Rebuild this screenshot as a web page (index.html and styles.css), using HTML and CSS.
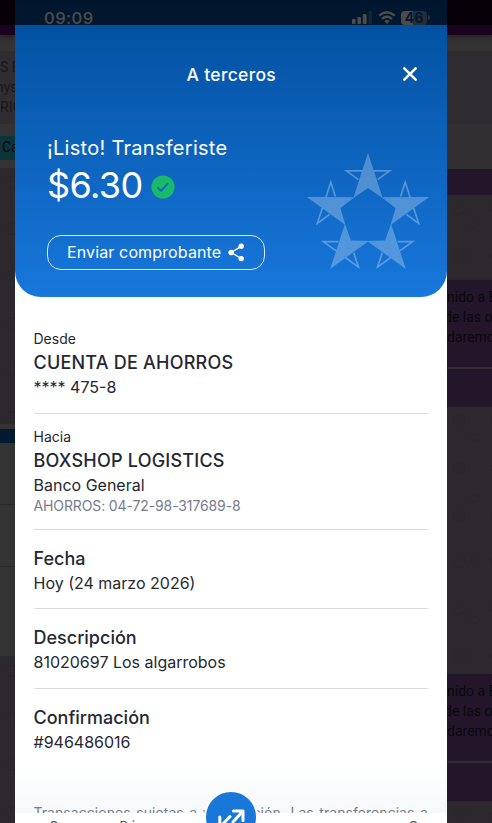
FILE: index.html
```
<!DOCTYPE html>
<html lang="es">
<head>
<meta charset="utf-8">
<title>A terceros</title>
<link rel="stylesheet" href="styles.css">
</head>
<body>
<div class="screen">
  <aside class="side left">
    <div class="topbar"></div>
    <div class="gap g16"></div>
    <div class="info"><span>S B</span><span>nys</span><span>RIO</span></div>
    <div class="gap g12"></div>
    <div class="tab">Ca</div>
    <div class="gap g8"></div>
    <div class="pattern p256"></div>
    <div class="gap g5"></div>
    <div class="navy"></div>
    <div class="cell c61"></div>
    <div class="cell c62"></div>
    <div class="cell c90"></div>
    <div class="pattern grow"></div>
  </aside>

  <main class="sheet">
    <header class="hero">
      <div class="status">
        <span class="time">09:09</span>
        <svg class="signal" width="20" height="13" viewBox="0 0 20 13"><rect x="0" y="8" width="3.6" height="5" rx="1"/><rect x="5.4" y="6" width="3.6" height="7" rx="1"/><rect x="10.8" y="3" width="3.8" height="10" rx="1"/><rect x="16.4" y="0" width="3.6" height="13" rx="1" opacity=".25"/></svg>
        <svg class="wifi" width="18" height="13" viewBox="0 0 18 13"><path d="M1.2 4.7Q9-2 16.8 4.7M4 7.8Q9 3.6 14 7.8"/><path class="dot" d="M9 13 6.2 10.1Q9 7.7 11.8 10.1Z"/></svg>
        <span class="battery">46</span><span class="cap"></span>
      </div>
      <div class="title">
        <h1>A terceros</h1>
        <svg class="close" width="16" height="16" viewBox="0 0 16 16"><path d="M2.3 2.3 13.7 13.7M13.7 2.3 2.3 13.7"/></svg>
      </div>
      <div class="result">
        <div class="summary">
          <p class="done">¡Listo! Transferiste</p>
          <p class="amount"><span>$6.30</span>
            <svg width="24" height="24" viewBox="0 0 24 24"><circle cx="12" cy="12" r="11.6" fill="#18b969"/><path d="m7 12.7 3.2 3.2 6.5-7.2" fill="none" stroke="#0e67bd" stroke-width="2" stroke-linecap="round" stroke-linejoin="round"/></svg>
          </p>
          <div class="share"><span>Enviar comprobante</span>
            <svg width="17" height="19" viewBox="0 0 17 19"><path d="M13.2 3.3 3.2 9.5l10 6" fill="none" stroke="#fff" stroke-width="1.4"/><circle cx="13.2" cy="3.2" r="2.7"/><circle cx="3.1" cy="9.5" r="2.7"/><circle cx="13.2" cy="15.6" r="2.7"/></svg>
          </div>
        </div>
        <svg class="stars" width="124" height="118" viewBox="-186 -195 372 354">
          <defs><g id="star">
            <path class="solid" d="M0-193 44-57 0-87-44-57Z"/>
            <path class="arm" d="M17.5-138.5H65L28.5-112M-17.5-138.5H-65L-28.5-112"/>
          </g></defs>
          <use href="#star"/><use href="#star" transform="rotate(72)"/><use href="#star" transform="rotate(144)"/><use href="#star" transform="rotate(216)"/><use href="#star" transform="rotate(288)"/>
        </svg>
      </div>
    </header>

    <section class="details">
      <div class="item from"><small>Desde</small><h2>CUENTA DE AHORROS</h2><p>**** 475-8</p></div>
      <div class="item to"><small>Hacia</small><h2>BOXSHOP LOGISTICS</h2><p>Banco General</p><p class="account">AHORROS: 04-72-98-317689-8</p></div>
      <div class="item"><h2>Fecha</h2><p>Hoy (24 marzo 2026)</p></div>
      <div class="item"><h2>Descripción</h2><p>81020697 Los algarrobos</p></div>
      <div class="item"><h2>Confirmación</h2><p>#946486016</p></div>
    </section>
    <div class="legal"><p>Transacciones sujetas a verificación. Las transferencias a</p></div>
    <nav class="tabs"><span>C</span><span>Pi</span><span>C</span></nav>
    <div class="fab"><svg width="28" height="24" viewBox="0 0 28 24"><path d="M16 15 25.5 4.5M16.5 4H26V13.5M13 9.5 3.5 19.5M2.8 10V20.3H12.5"/></svg></div>
  </main>

  <aside class="side right">
    <div class="topbar"></div>
    <div class="gap g16"></div>
    <div class="panel"></div>
    <div class="gap g45"></div>
    <div class="purple r26"><i>⋮</i></div>
    <div class="pattern p85"></div>
    <div class="purple msg"><span>nido a B</span><span>de las op</span><span>daremos</span></div>
    <div class="purple r38"><i>⋮</i></div>
    <div class="pattern p267"></div>
    <div class="purple msg"><span>nido a B</span><span>de las op</span><span>daremos</span></div>
    <div class="purple r38"><i>⋮</i></div>
    <div class="pattern grow"></div>
  </aside>
  <div class="shade"></div>
</div>
</body>
</html>
```
FILE: styles.css
```
* { box-sizing: border-box; margin: 0; padding: 0; }
body { width: 492px; height: 823px; overflow: hidden; font-family: Inter, "Liberation Sans", sans-serif; background: #2d262e; }
.screen { position: relative; display: grid; grid-template-columns: 15px 432px 45px; height: 823px; overflow: hidden; }

.side { display: flex; flex-direction: column; height: 823px; overflow: hidden; font-family: Roboto, sans-serif; font-size: 14px; color: #0b080c; white-space: nowrap; }
.side > div { flex: none; }
.side .grow { flex: 1; }
.topbar { height: 35px; background: #19031f; box-shadow: 0 2px 4px #202020; position: relative; }
.gap { background: #333; }
.g5 { height: 5px; }
.g8 { height: 8px; }
.g12 { height: 12px; }
.g16 { height: 16px; }
.g45 { height: 45px; background: #312f31; }
.info { height: 73px; padding-top: 6px; background: #302d32; display: flex; flex-direction: column; line-height: 20px; color: #17151a; }
.info span:nth-child(2) { margin-left: -4px; }
.tab { height: 24px; background: #0b343d; line-height: 23px; padding-left: 2px; }
.pattern { background: radial-gradient(circle at 12px 14px, transparent 5px, #2a242b 5.5px 6px, transparent 6.5px) 0 0 / 38px 47px, radial-gradient(circle at 28px 30px, transparent 3px, #2a242b 3.5px 4px, transparent 4.5px) 0 0 / 52px 61px, #2d272e; }
.p256 { height: 256px; }
.navy { height: 14px; background: #021a31; }
.cell { background: #333; border-bottom: 1px solid #292929; }
.c61 { height: 62px; }
.c62 { height: 62px; }
.c90 { height: 90px; }
.panel { height: 73px; background: #2e2c31; }
.purple { background: #24162a; box-shadow: 0 1px 2px #19121b; }
.purple i { float: right; width: 3px; font-style: normal; }
.r26 { height: 26px; }
.p85 { height: 85px; }
.msg { height: 87px; padding-top: 7px; display: flex; flex-direction: column; line-height: 20px; }
.msg span:nth-child(2) { margin-left: -3px; }
.r38 { height: 40px; border-top: 2px solid #302a32; line-height: 38px; }
.p267 { height: 267px; }

.sheet { position: relative; display: flex; flex-direction: column; height: 823px; overflow: hidden; background: #fff; color: #252832; }
.hero { flex: none; height: 297px; color: #fff; background: linear-gradient(#004b97, #0352a2 28px, #1877dc); border-radius: 0 0 26px 26px; }
.status { display: flex; align-items: center; height: 25px; padding: 10px 17px 0 29px; }
.time { font-size: 16.5px; font-weight: 500; letter-spacing: .5px; margin-right: auto; }
.signal, .wifi, .battery { flex: none; }
.signal { fill: #fff; margin-right: 6px; }
.wifi { fill: none; stroke: #fff; stroke-width: 2.4; margin-right: 5px; }
.wifi .dot { fill: #fff; stroke: none; }
.battery { width: 26px; height: 14px; border-radius: 4px; background: linear-gradient(90deg, #fff 46%, #789cbe 46%); color: #06509c; font-size: 14px; line-height: 14px; font-weight: 700; text-align: center; }
.cap { width: 2px; height: 5px; background: #789cbe; border-radius: 0 2px 2px 0; margin-left: 1px; }
.title { display: flex; align-items: center; justify-content: flex-end; height: 98px; padding-right: 29px; }
.title h1 { font-size: 17.5px; line-height: 22px; font-weight: 500; letter-spacing: .3px; margin: 2px 126px 0 0; white-space: nowrap; }
.close { flex: none; fill: none; stroke: #fff; stroke-width: 2.6; stroke-linecap: round; }
.result { display: flex; align-items: flex-start; justify-content: space-between; padding: 12px 17px 0 32px; }
.done { font-size: 20px; line-height: 26px; font-weight: 400; letter-spacing: .28px; }
.amount { display: flex; align-items: center; gap: 8px; height: 46px; font-size: 36px; letter-spacing: -.6px; margin-top: 1px; }
.amount svg { margin-top: 4px; }
.share { display: flex; align-items: center; gap: 7px; width: 218px; height: 35px; margin-top: 27px; padding: 0 0 1px 19px; border: 1px solid #dcebfb; border-radius: 14px; font-size: 16px; letter-spacing: .13px; white-space: nowrap; }
.share svg { fill: #fff; }
.stars { flex: none; margin-top: 17px; }
.solid { fill: #fff; fill-opacity: .27; }
.arm { fill: none; stroke: #fff; stroke-opacity: .3; stroke-width: 5; }

.details { flex: none; padding: 32px 19px 0 18.5px; }
.item { height: 79.5px; padding-top: 16.4px; border-bottom: 1px solid #d9dbe5; white-space: nowrap; }
.item:last-child { border: 0; }
.from { height: 84.5px; padding-top: 0; }
.to { height: 116px; padding-top: 13px; }
.item small { display: block; font-size: 14px; line-height: 20px; }
.item h2 { font-size: 18px; line-height: 26px; font-weight: 500; }
.item p { font-size: 16px; line-height: 24px; }
.item:nth-child(n+3) p { line-height: 23px; }
.from h2, .to h2 { position: relative; top: 1px; letter-spacing: .22px; }
.item p.account { font-size: 14px; line-height: 17px; letter-spacing: -.12px; color: #777c8d; }
.legal { flex: none; height: 45px; padding: 37px 19px 0 18.5px; overflow: hidden; background: linear-gradient(#fff, #f6f8fa); font-size: 14px; line-height: 16px; color: #777c8d; white-space: nowrap; }
.legal p { text-align: justify; text-align-last: justify; white-space: normal; letter-spacing: .05px; }
.tabs { display: flex; flex: 1; justify-content: space-between; padding: 7px 29px 0 34px; background: #fff; color: #555; font-size: 13px; line-height: 13px; }
.tabs span:nth-child(2) { margin: 0 auto 0 61px; letter-spacing: 4px; }
.fab { position: absolute; left: 189px; top: 790px; width: 54px; height: 54px; border: 2px solid #fff; border-radius: 50%; background: #1877d8; display: flex; align-items: center; justify-content: center; }
.fab svg { fill: none; stroke: #fff; stroke-width: 3; stroke-linecap: round; stroke-linejoin: round; margin-top: 3px; }
.shade { position: absolute; inset: 0 0 auto; height: 25px; background: rgba(0, 0, 0, .7); }
```
